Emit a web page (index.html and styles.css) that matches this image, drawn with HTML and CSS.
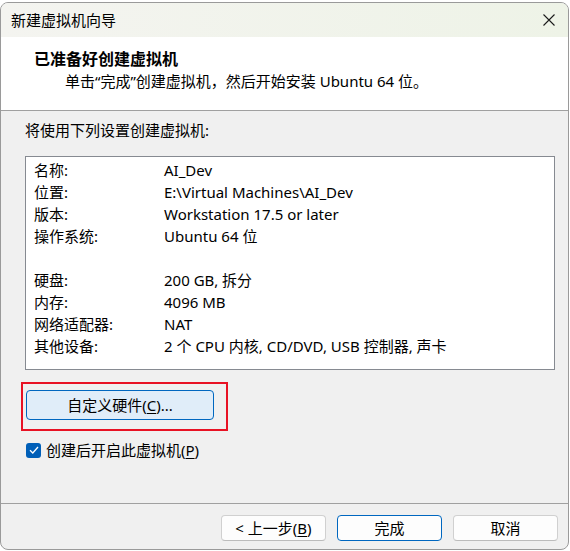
FILE: index.html
```html
<!DOCTYPE html>
<html lang="zh-CN">
<head>
  <meta charset="UTF-8" />
  <meta name="viewport" content="width=device-width, initial-scale=1" />
  <title>新建虚拟机向导</title>
  <link rel="stylesheet" href="styles.css">
</head>
<body>
  <div class="window">
    <div class="titlebar">
      <span class="title">新建虚拟机向导</span>
      <button class="close" aria-label="关闭">
        <svg width="12" height="12" viewBox="0 0 12 12">
          <path d="M0.5 0.5 L11.5 11.5 M11.5 0.5 L0.5 11.5" stroke="#1b1b1b" stroke-width="1.1" fill="none" />
        </svg>
      </button>
    </div>

    <div class="header">
      <h1>已准备好创建虚拟机</h1>
      <p>单击“完成”创建虚拟机，然后开始安装 Ubuntu 64 位。</p>
    </div>

    <div class="content">
      <p class="intro">将使用下列设置创建虚拟机:</p>

      <div class="summary">
        <div class="row"><span class="key">名称:</span><span>AI_Dev</span></div>
        <div class="row"><span class="key">位置:</span><span>E:\Virtual Machines\AI_Dev</span></div>
        <div class="row"><span class="key">版本:</span><span>Workstation 17.5 or later</span></div>
        <div class="row"><span class="key">操作系统:</span><span>Ubuntu 64 位</span></div>
        <div class="row"></div>
        <div class="row"><span class="key">硬盘:</span><span>200 GB, 拆分</span></div>
        <div class="row"><span class="key">内存:</span><span>4096 MB</span></div>
        <div class="row"><span class="key">网络适配器:</span><span>NAT</span></div>
        <div class="row"><span class="key">其他设备:</span><span>2 个 CPU 内核, CD/DVD, USB 控制器, 声卡</span></div>
      </div>

      <div class="custom">
        <button class="btn custom-btn">自定义硬件(<u>C</u>)...</button>
        <div class="highlight"></div>
      </div>

      <label class="check">
        <span class="box">
          <svg width="10" height="8" viewBox="0 0 10 8">
            <path d="M1 4.2 L3.8 7 L9 1" stroke="#fff" stroke-width="1.3" fill="none" />
          </svg>
        </span>
        <span>创建后开启此虚拟机(<u>P</u>)</span>
      </label>
    </div>

    <div class="footer">
      <button class="btn">&lt; 上一步(<u>B</u>)</button>
      <button class="btn default">完成</button>
      <button class="btn">取消</button>
    </div>
  </div>
</body>
</html>
```

FILE: styles.css
```css
body {
  margin: 0;
  background: #ffffff;
  font-family: "Noto Sans", "Noto Sans CJK SC", sans-serif;
  font-size: 15px;
  color: #000;
}

.window {
  width: 567px;
  height: 546px;
  margin-top: 2px;
  border: 1px solid #9a9a9a;
  border-radius: 8px;
  overflow: hidden;
  background: #f0f0f0;
  display: flex;
  flex-direction: column;
}

.titlebar {
  height: 34px;
  display: flex;
  align-items: center;
  justify-content: space-between;
  padding: 0 13px 0 10px;
  background: linear-gradient(to right, #f4f4f0, #eef3e7);
}
.title {
  line-height: 20px;
}
.close {
  background: none;
  border: none;
  padding: 0;
  width: 12px;
  height: 12px;
  display: flex;
}

.header {
  background: #fff;
  border-bottom: 1px solid #a0a0a0;
  padding: 11px 0 0 33px;
  box-sizing: border-box;
  height: 74px;
}
.header h1 {
  margin: 0;
  font-size: 16px;
  font-weight: bold;
  line-height: 22px;
}
.header p {
  margin: 0 0 0 31px;
  line-height: 22px;
}

.content {
  flex: 1;
  padding: 8px 13px 0 24px;
}
.intro {
  margin: 0;
  line-height: 22px;
}

.summary {
  margin-top: 15px;
  background: #fff;
  border: 1px solid #868a91;
  padding: 2px 8px 12px;
}
.row {
  display: flex;
  height: 22px;
  line-height: 22px;
}
.key {
  width: 130px;
}

.btn {
  font-family: inherit;
  font-size: 15px;
  color: #000;
  background: #fdfdfd;
  border: 1px solid #d0d0d0;
  border-bottom-color: #bcbcbc;
  border-radius: 4px;
  padding: 0;
  line-height: 22px;
}
.btn u {
  text-underline-offset: 2px;
}

.custom {
  position: relative;
  margin-top: 20px;
  padding-left: 1px;
}
.custom-btn {
  width: 188px;
  height: 30px;
  background: #e0edf9;
  border: 1px solid #0067c0;
}
.highlight {
  position: absolute;
  left: -4px;
  top: -8px;
  width: 203px;
  height: 45px;
  border: 2px solid #e81224;
}

.check {
  display: flex;
  align-items: center;
  gap: 5px;
  margin-top: 19px;
  line-height: 22px;
}
.check u {
  text-underline-offset: 2px;
}
.box {
  width: 15px;
  height: 15px;
  margin-left: 1px;
  border-radius: 3px;
  background: #005fb8;
  display: flex;
  align-items: center;
  justify-content: center;
}

.footer {
  border-top: 1px solid #a0a0a0;
  height: 46px;
  box-sizing: border-box;
  padding: 11px 10px 0 0;
  display: flex;
  justify-content: flex-end;
  gap: 11px;
}
.footer .btn {
  width: 105px;
  height: 26px;
}
.footer .default {
  border: 1px solid #0067c0;
}
```
